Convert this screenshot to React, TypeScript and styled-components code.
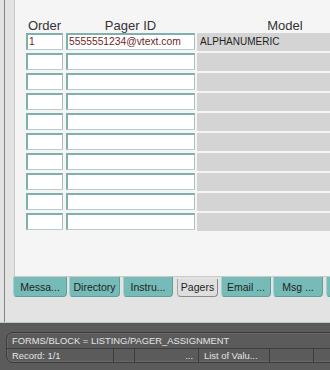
import React from "react";
import styled, { createGlobalStyle } from "styled-components";

const Global = createGlobalStyle`
  html, body { margin: 0; padding: 0; background: #e3e3e3; }
  body { font-family: "Liberation Sans", Arial, sans-serif; }
`;

const Screen = styled.div`
  width: 330px;
  height: 370px;
  overflow: hidden;
  background: #e3e3e3;
  display: flex;
  flex-direction: column;
`;

const Work = styled.div`
  height: 322px;
  padding-left: 4px;
  box-sizing: border-box;
  display: flex;
  flex-shrink: 0;
`;

const Gutter = styled.div`
  flex: 1;
  border-left: 1px solid #858585;
  padding-left: 9px;
  display: flex;
  flex-direction: column;
  min-width: 0;
`;

const Panel = styled.div`
  height: 277px;
  box-sizing: border-box;
  width: 400px;
  background: #f5f5f5;
  border-left: 1px solid #c9c9c9;
  border-bottom: 1px solid #c9c9c9;
  padding: 18px 0 0 11px;
  display: flex;
  flex-direction: column;
`;

const HeaderRow = styled.div`
  display: flex;
  height: 15px;
  font-size: 13px;
  color: #333;
  line-height: 15px;
`;

const HeadCell = styled.div<{ $w: number; $ml?: number }>`
  width: ${(p) => p.$w}px;
  margin-left: ${(p) => p.$ml ?? 0}px;
  text-align: center;
  flex-shrink: 0;
`;

const Rows = styled.div`
  display: flex;
  flex-direction: column;
  gap: 2px;
`;

const Row = styled.div`
  display: flex;
  height: 18px;
`;

const Field = styled.div<{ $w: number; $ml?: number }>`
  width: ${(p) => p.$w}px;
  margin-left: ${(p) => p.$ml ?? 0}px;
  height: 17px;
  box-sizing: border-box;
  background: #fff;
  border-top: 2px solid #7fb0ad;
  border-left: 2px solid #7fb0ad;
  border-right: 1px solid #a9c2c0;
  border-bottom: 1px solid #b9cbca;
  font-size: 10.3px;
  line-height: 13px;
  color: #6e1f1f;
  padding-left: 1px;
  white-space: nowrap;
  overflow: hidden;
  flex-shrink: 0;
`;

const ModelCell = styled.div`
  margin-left: 2px;
  width: 176px;
  height: 18px;
  background: #d4d4d4;
  font-size: 10px;
  line-height: 17px;
  color: #1e1e1e;
  padding-left: 3px;
  box-sizing: border-box;
  flex-shrink: 0;
`;

const TabStrip = styled.div`
  display: flex;
  margin-left: -1px;
  height: 21px;
`;

const Tab = styled.div<{ $w: number; $ml: number; $active?: boolean }>`
  width: ${(p) => p.$w}px;
  margin-left: ${(p) => p.$ml}px;
  flex-shrink: 0;
  box-sizing: border-box;
  height: ${(p) => (p.$active ? 18 : 20)}px;
  margin-top: ${(p) => (p.$active ? 2 : 0)}px;
  background: ${(p) => (p.$active ? "#dedede" : "#76bbb7")};
  border-left: 1px solid ${(p) => (p.$active ? "#a8a8a8" : "#a2d2ce")};
  border-right: 1px solid ${(p) => (p.$active ? "#8c8c8c" : "#5f9f9b")};
  border-bottom: 1px solid ${(p) => (p.$active ? "#8c8c8c" : "#5f9f9b")};
  border-radius: 0 0 4px 4px;
  font-size: 10.5px;
  line-height: ${(p) => (p.$active ? 17 : 20)}px;
  text-align: center;
  color: #1f1f1f;
  white-space: nowrap;
  overflow: hidden;
`;

const StatusBar = styled.div`
  flex: 1;
  background: #5b5b5b;
  border-top: 1px solid #b9caca;
  padding: 9px 0 0 6px;
  box-sizing: border-box;
`;

const StatusBox = styled.div`
  width: 340px;
  height: 31px;
  box-sizing: border-box;
  border: 1px solid #3c3c3c;
  box-shadow: inset 0 0 0 1px #6a6a6a;
  border-radius: 7px;
  display: flex;
  flex-direction: column;
  color: #e4e4e4;
  font-size: 9.4px;
`;

const StatusLine = styled.div`
  height: 15px;
  line-height: 15px;
  padding-left: 5px;
  border-bottom: 1px solid #3e3e3e;
  white-space: nowrap;
`;

const CellRow = styled.div`
  display: flex;
  height: 14px;
  line-height: 13px;
`;

const StatCell = styled.div<{ $w: number; $right?: boolean }>`
  width: ${(p) => p.$w}px;
  flex-shrink: 0;
  box-sizing: border-box;
  padding: 0 5px;
  text-align: ${(p) => (p.$right ? "right" : "left")};
  border-right: 1px solid #3e3e3e;
  white-space: nowrap;
  overflow: hidden;
`;

const tabs = [
  { label: "Messa...", w: 54, ml: 0 },
  { label: "Directory", w: 51, ml: 2 },
  { label: "Instru...", w: 50, ml: 3 },
  { label: "Pagers", w: 41, ml: 4, active: true },
  { label: "Email ...", w: 50, ml: 3 },
  { label: "Msg ...", w: 50, ml: 2 },
  { label: "", w: 40, ml: 3 },
];

export default function App() {
  const rows = Array.from({ length: 10 }, (_, i) => i);
  return (
    <>
      <Global />
      <Screen>
        <Work>
          <Gutter>
            <Panel>
              <HeaderRow>
                <HeadCell $w={37}>Order</HeadCell>
                <HeadCell $w={129} $ml={3}>Pager ID</HeadCell>
                <HeadCell $w={176} $ml={2}>Model</HeadCell>
              </HeaderRow>
              <Rows>
                {rows.map((i) => (
                  <Row key={i}>
                    <Field $w={37}>{i === 0 ? "1" : ""}</Field>
                    <Field $w={129} $ml={3}>{i === 0 ? "5555551234@vtext.com" : ""}</Field>
                    <ModelCell>{i === 0 ? "ALPHANUMERIC" : ""}</ModelCell>
                  </Row>
                ))}
              </Rows>
            </Panel>
            <TabStrip>
              {tabs.map((t, i) => (
                <Tab key={i} $w={t.w} $ml={t.ml} $active={t.active}>
                  {t.label}
                </Tab>
              ))}
            </TabStrip>
          </Gutter>
        </Work>
        <StatusBar>
          <StatusBox>
            <StatusLine>FORMS/BLOCK = LISTING/PAGER_ASSIGNMENT</StatusLine>
            <CellRow>
              <StatCell $w={107}>Record: 1/1</StatCell>
              <StatCell $w={21}></StatCell>
              <StatCell $w={64} $right>...</StatCell>
              <StatCell $w={71}>List of Valu...</StatCell>
              <StatCell $w={44}></StatCell>
              <StatCell $w={40}></StatCell>
            </CellRow>
          </StatusBox>
        </StatusBar>
      </Screen>
    </>
  );
}
